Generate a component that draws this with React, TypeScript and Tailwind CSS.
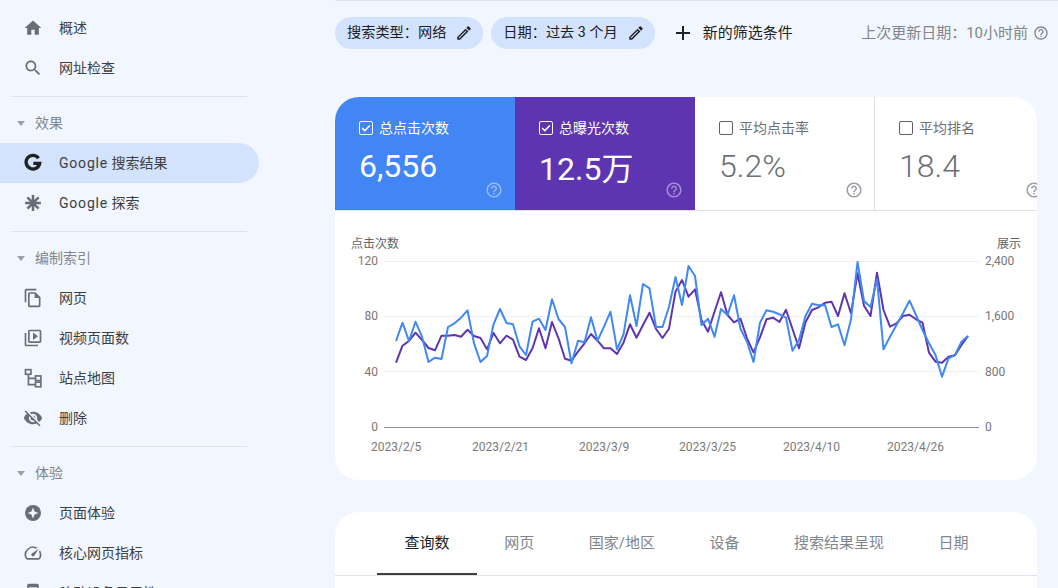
import React from 'react';

const FONT = 'font-[Roboto,"Noto_Sans_CJK_SC",sans-serif]';

const HELP = 'M11 18h2v-2h-2v2zm1-16C6.48 2 2 6.48 2 12s4.48 10 10 10 10-4.48 10-10S17.52 2 12 2zm0 18c-4.41 0-8-3.59-8-8s3.59-8 8-8 8 3.59 8 8-3.59 8-8 8zm0-14c-2.21 0-4 1.79-4 4h2c0-1.1.9-2 2-2s2 .9 2 2c0 2-3 1.75-3 5h2c0-2.25 3-2.5 3-5 0-2.21-1.79-4-4-4z';
const PENCIL = 'M14.06 9.02l.92.92L5.92 19H5v-.92l9.06-9.06M17.66 3c-.25 0-.51.1-.7.29l-1.83 1.83 3.75 3.75 1.83-1.83c.39-.39.39-1.02 0-1.41l-2.34-2.34c-.2-.2-.45-.29-.71-.29zm-3.6 3.19L3 17.25V21h3.75L17.81 9.94l-3.75-3.75z';

// y values read off the chart, x is one step per day
const blue = [333, 278, 333, 275, 320, 396, 383, 387, 291, 280, 263, 241, 340, 396, 378, 283, 237, 279, 283, 349, 375, 275, 266, 300, 208, 267, 291, 400, 332, 337, 262, 332, 290, 245, 358, 313, 196, 288, 162, 175, 291, 291, 230, 141, 225, 108, 138, 285, 266, 320, 237, 255, 196, 296, 335, 396, 278, 241, 245, 253, 263, 362, 330, 258, 221, 226, 225, 291, 283, 346, 268, 96, 213, 231, 148, 358, 320, 285, 250, 212, 255, 300, 340, 375, 440, 385, 375, 335, 318];
const purple = [398, 347, 333, 308, 330, 354, 361, 317, 317, 315, 320, 299, 318, 324, 358, 309, 340, 317, 329, 380, 390, 355, 295, 355, 276, 325, 386, 392, 365, 340, 312, 332, 355, 355, 372, 338, 283, 323, 285, 248, 297, 324, 296, 185, 150, 200, 178, 270, 305, 245, 187, 255, 277, 266, 325, 367, 322, 268, 263, 276, 239, 297, 355, 277, 240, 232, 218, 215, 258, 190, 250, 130, 227, 258, 128, 240, 290, 280, 258, 254, 268, 278, 368, 395, 398, 380, 376, 345, 318];

const toPoints = (vals: number[]) =>
  vals.map((v, i) => `${(61 + 6.5 * i).toFixed(1)},${(19 + v / 3).toFixed(1)}`).join(' ');

const Icon = ({ d, size = 20, className = '' }: { d: string; size?: number; className?: string }) => (
  <svg width={size} height={size} viewBox="0 0 24 24" fill="currentColor" className={className}>
    <path d={d} />
  </svg>
);

const icons: Record<string, React.ReactNode> = {
  home: <Icon d="M10 20v-6h4v6h5v-8h3L12 3 2 12h3v8z" />,
  search: <Icon d="M15.5 14h-.79l-.28-.27C15.41 12.59 16 11.11 16 9.5 16 5.91 13.09 3 9.5 3S3 5.91 3 9.5 5.91 16 9.5 16c1.61 0 3.09-.59 4.23-1.57l.27.28v.79l5 4.99L20.49 19l-4.99-5zm-6 0C7.01 14 5 11.99 5 9.5S7.01 5 9.5 5 14 7.01 14 9.5 11.99 14 9.5 14z" />,
  google: (
    <svg width="20" height="20" viewBox="0 0 24 24" fill="none" stroke="#202124" strokeWidth="4">
      <path d="M18.600 6.200A8.200 8.200 0 1 0 20 12.400H12.400" />
    </svg>
  ),
  asterisk: (
    <svg width="20" height="20" viewBox="0 0 24 24" fill="none" stroke="currentColor" strokeWidth="3">
      <path d="M12 2.500v19M2.500 12h19M5.300 5.300l13.400 13.400M18.700 5.300L5.300 18.700" />
    </svg>
  ),
  pages: <Icon d="M16 1H4c-1.1 0-2 .9-2 2v14h2V3h12V1zm-1 4H8c-1.1 0-1.99.9-1.99 2L6 21c0 1.1.89 2 1.99 2H19c1.1 0 2-.9 2-2V11l-6-6zM8 21V7h6v5h5v9H8z" />,
  video: <Icon d="M4 6H2v14c0 1.1.9 2 2 2h14v-2H4V6zm16-4H8c-1.1 0-2 .9-2 2v12c0 1.1.9 2 2 2h12c1.1 0 2-.9 2-2V4c0-1.1-.9-2-2-2zm0 14H8V4h12v12zM12 14.5l6-4.5-6-4.5v9z" />,
  sitemap: (
    <svg width="20" height="20" viewBox="0 0 24 24" fill="none" stroke="currentColor" strokeWidth="2">
      <rect x="3" y="2" width="6.500" height="5.500" />
      <rect x="15" y="9.500" width="6.500" height="5.500" />
      <rect x="15" y="17" width="6.500" height="5.500" />
      <path d="M6.500 7.500v12.500H15M6.500 12.500H15" />
    </svg>
  ),
  eyeOff: <Icon d="M12 7c2.76 0 5 2.24 5 5 0 .65-.13 1.26-.36 1.83l2.92 2.92c1.51-1.26 2.7-2.89 3.43-4.75-1.73-4.39-6-7.5-11-7.5-1.4 0-2.74.25-3.98.7l2.16 2.16C10.74 7.13 11.35 7 12 7zM2 4.27l2.28 2.28.46.46C3.08 8.3 1.78 10.02 1 12c1.73 4.39 6 7.5 11 7.5 1.55 0 3.03-.3 4.38-.84l.42.42L19.73 22 21 20.73 3.27 3 2 4.27zM7.53 9.8l1.55 1.55c-.05.21-.08.43-.08.65 0 1.66 1.34 3 3 3 .22 0 .44-.03.65-.08l1.55 1.55c-.67.33-1.41.53-2.2.53-2.76 0-5-2.24-5-5 0-.79.2-1.53.53-2.2zm4.31-.78l3.15 3.15.02-.16c0-1.66-1.34-3-3-3l-.17.01z" />,
  experience: (
    <svg width="20" height="20" viewBox="0 0 24 24">
      <circle cx="12" cy="12" r="9.600" fill="currentColor" />
      <path d="M12 5.500l1.900 4.600 4.600 1.900-4.600 1.900-1.900 4.600-1.900-4.600L5.500 12l4.600-1.900z" fill="#f2f6fe" />
    </svg>
  ),
  gauge: <Icon d="M20.38 8.57l-1.23 1.85a8 8 0 0 1-.22 7.58H5.07A8 8 0 0 1 15.58 6.85l1.85-1.23A10 10 0 0 0 3.35 19a2 2 0 0 0 1.72 1h13.85a2 2 0 0 0 1.74-1 10 10 0 0 0-.27-10.44zm-9.79 6.84a2 2 0 0 0 2.83 0l5.66-8.49-8.49 5.66a2 2 0 0 0 0 2.83z" />,
  phone: <Icon d="M17 1.010L7 1c-1.100 0-2 .9-2 2v18c0 1.100.9 2 2 2h10c1.100 0 2-.9 2-2V3c0-1.100-.9-1.990-2-1.990zM17 19H7V5h10v14z" />,
};

const NavItem = ({ icon, label, active = false }: { icon: string; label: React.ReactNode; active?: boolean }) => (
  <div className={`flex h-10 w-[259px] items-center rounded-r-full pl-[23px] ${active ? 'bg-[#d3e3fd]' : ''}`}>
    <span className="flex w-9 shrink-0 text-[#6a6e73]">{icons[icon]}</span>
    <span className="whitespace-nowrap text-sm text-[#3c4043]">{label}</span>
  </div>
);

const SectionHead = ({ label }: { label: string }) => (
  <div className="flex h-[46px] items-center pl-[17px] pt-[6px]">
    <span className="h-0 w-0 border-x-4 border-t-[5px] border-x-transparent border-t-[#9aa0a6]" />
    <span className="ml-[10px] text-sm text-[#80868b]">{label}</span>
  </div>
);

const Divider = () => <div className="ml-[11px] mt-2 h-px w-[236px] bg-[#e0e2e6]" />;

const Chip = ({ label }: { label: string }) => (
  <div className="flex h-8 items-center gap-[9px] rounded-full bg-[#d3e3fd] pl-3 pr-[10px] text-[14.2px] text-[#202124]">
    <span className="whitespace-nowrap">{label}</span>
    <Icon d={PENCIL} size={18} />
  </div>
);

const Tile = ({
  label,
  value,
  checked = false,
  bg = '',
  border = '',
  valueClass = '',
}: {
  label: string;
  value: string;
  checked?: boolean;
  bg?: string;
  border?: string;
  valueClass?: string;
}) => (
  <div className={`flex h-full w-[180px] shrink-0 flex-col pl-6 pt-6 ${bg} ${border} ${checked ? 'text-white' : 'text-[#6b6f74]'}`}>
    <div className="flex h-[14px] items-center gap-[6px]">
      {checked ? (
        <svg width="14" height="14" viewBox="0 0 14 14" fill="none" stroke="white">
          <rect x="0.5" y="0.5" width="13" height="13" rx="1.500" />
          <path d="M3.200 7.200l2.600 2.500 5-5.200" strokeWidth="1.600" />
        </svg>
      ) : (
        <span className="h-[14px] w-[14px] rounded-[2px] border border-[#5f6368]" />
      )}
      <span className="whitespace-nowrap text-sm leading-none">{label}</span>
    </div>
    <div className={`mt-[11px] h-[40px] whitespace-nowrap text-[32px] leading-[40px] ${checked ? 'font-normal' : 'font-light'} ${valueClass}`}>{value}</div>
    <div className="-mt-[5px] flex w-[144px] shrink-0 justify-end">
      <Icon d={HELP} size={18} className={checked ? 'text-white/45' : 'text-[#9a9ea3]'} />
    </div>
  </div>
);

const Chart = () => {
  const gridY = [50, 105, 160];
  const leftLabels = [['120', 54], ['80', 109], ['40', 165], ['0', 220]] as const;
  const rightLabels = [['2,400', 54], ['1,600', 109], ['800', 165], ['0', 220]] as const;
  const dates = [['2023/2/5', 36], ['2023/2/21', 137], ['2023/3/9', 244], ['2023/3/25', 344], ['2023/4/10', 448], ['2023/4/26', 552]] as const;
  return (
    <svg width="702" height="269" viewBox="0 0 702 269" className="block" fontSize="12">
      <text x="16" y="37" fill="#5f6368">点击次数</text>
      <text x="662" y="37" fill="#5f6368">展示</text>
      {gridY.map((y) => (
        <line key={y} x1="49" x2="644" y1={y + 0.5} y2={y + 0.5} stroke="#eceef1" />
      ))}
      <line x1="49" x2="644" y1="216.500" y2="216.500" stroke="#8f9296" />
      {leftLabels.map(([t, y]) => (
        <text key={t} x="43" y={y} textAnchor="end" fill="#80756f">{t}</text>
      ))}
      {rightLabels.map(([t, y]) => (
        <text key={t} x="650" y={y} fill="#75757a">{t}</text>
      ))}
      {dates.map(([t, x]) => (
        <text key={t} x={x} y="240" fill="#7a7a7a">{t}</text>
      ))}
      <polyline points={toPoints(purple)} fill="none" stroke="#5e35b1" strokeWidth="2" strokeLinejoin="round" />
      <polyline points={toPoints(blue)} fill="none" stroke="#4088f2" strokeWidth="2" strokeLinejoin="round" />
    </svg>
  );
};

const Tab = ({ label, active = false }: { label: string; active?: boolean }) => (
  <div className={`flex h-full items-center whitespace-nowrap border-b-2 pt-[2px] text-[15px] ${active ? 'border-[#3c4043] px-[27.5px] text-[#202124]' : 'border-transparent px-[27.25px] text-[#80868b]'}`}>
    {label}
  </div>
);

export default function App() {
  return (
    <div className={`flex h-[588px] w-[1058px] overflow-hidden bg-[#f2f6fe] ${FONT}`}>
      <aside className="w-[335px] shrink-0 pt-2">
        <NavItem icon="home" label="概述" />
        <NavItem icon="search" label="网址检查" />
        <Divider />
        <SectionHead label="效果" />
        <NavItem icon="google" active label={<><span className="tracking-[0.8px]">Google</span> 搜索结果</>} />
        <NavItem icon="asterisk" label={<><span className="tracking-[0.8px]">Google</span> 探索</>} />
        <Divider />
        <SectionHead label="编制索引" />
        <NavItem icon="pages" label="网页" />
        <NavItem icon="video" label="视频页面数" />
        <NavItem icon="sitemap" label="站点地图" />
        <NavItem icon="eyeOff" label="删除" />
        <Divider />
        <SectionHead label="体验" />
        <NavItem icon="experience" label="页面体验" />
        <NavItem icon="gauge" label="核心网页指标" />
        <NavItem icon="phone" label="移动设备易用性" />
      </aside>

      <main className="w-[723px] shrink-0 border-t border-[#e2e5e8]">
        <div className="mt-4 flex h-8 items-center gap-2 pr-[9px]">
          <Chip label="搜索类型：网络" />
          <Chip label="日期：过去 3 个月" />
          <div className="ml-2 flex items-center gap-2 text-[15px] text-[#202124]">
            <Icon d="M19 13h-6v6h-2v-6H5v-2h6V5h2v6h6v2z" size={24} />
            <span>新的筛选条件</span>
          </div>
          <div className="ml-auto flex items-center gap-[5px] text-[15px] text-[#80868b]">
            <span className="whitespace-nowrap">上次更新日期：10小时前</span>
            <Icon d={HELP} size={16} />
          </div>
        </div>

        <section className="mt-12 h-[383px] w-[702px] overflow-hidden rounded-3xl bg-white">
          <div className="flex h-[114px] border-b border-[#e0e0e0]">
            <Tile label="总点击次数" value="6,556" checked bg="bg-[#4285f4]" />
            <Tile label="总曝光次数" value="12.5万" checked bg="bg-[#5e35b1]" valueClass="pt-[3px]" />
            <Tile label="平均点击率" value="5.2%" border="border-r border-[#e0e0e0]" />
            <Tile label="平均排名" value="18.4" />
          </div>
          <Chart />
        </section>

        <section className="mt-8 h-[100px] w-[702px] rounded-t-3xl bg-white">
          <div className="flex h-16 border-b border-[#e0e2e6] pl-[42px]">
            <Tab label="查询数" active />
            <Tab label="网页" />
            <Tab label="国家/地区" />
            <Tab label="设备" />
            <Tab label="搜索结果呈现" />
            <Tab label="日期" />
          </div>
        </section>
      </main>
    </div>
  );
}
